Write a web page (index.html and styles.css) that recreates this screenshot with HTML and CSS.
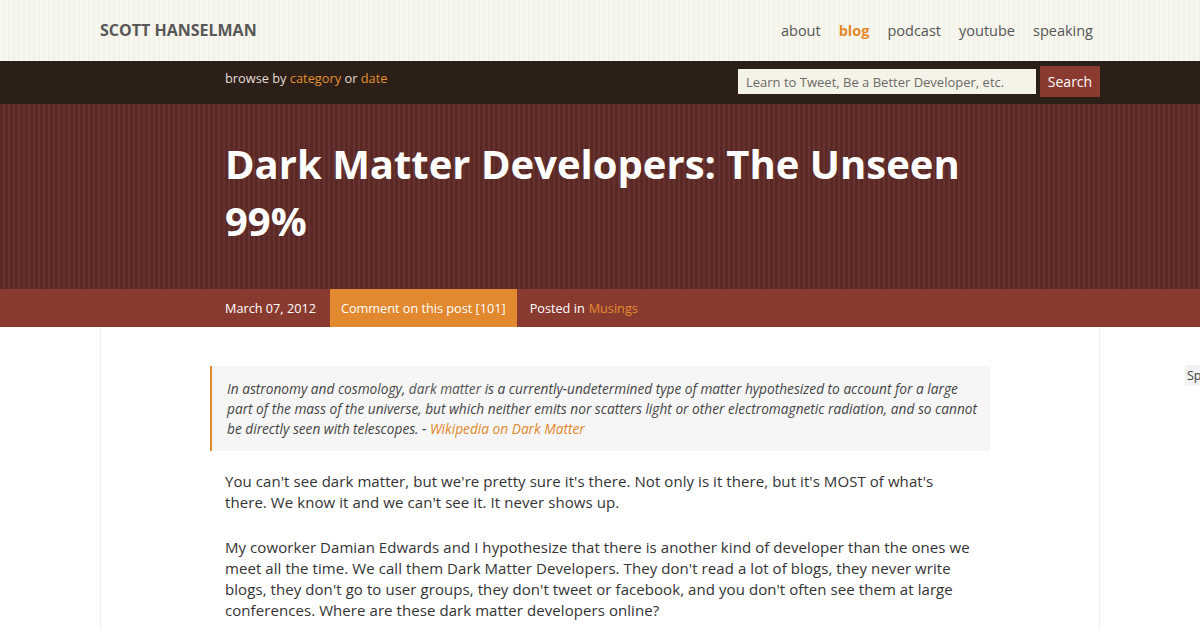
FILE: index.html
```html
<!DOCTYPE html>
<html>
<head>
<meta charset="utf-8">
<title>Dark Matter Developers: The Unseen 99%</title>
<link rel="stylesheet" href="styles.css">
</head>
<body>
<header class="top">
  <div class="wrap top-inner">
    <a class="logo" href="#">SCOTT HANSELMAN</a>
    <nav class="nav">
      <a href="#">about</a>
      <a href="#" class="active">blog</a>
      <a href="#">podcast</a>
      <a href="#">youtube</a>
      <a href="#">speaking</a>
    </nav>
  </div>
</header>
<div class="browse">
  <div class="wrap browse-inner">
    <div class="browse-text">browse by <a href="#">category</a> or <a href="#">date</a></div>
    <form class="search">
      <input class="search-input" type="text" placeholder="Learn to Tweet, Be a Better Developer, etc.">
      <button class="search-btn" type="button">Search</button>
    </form>
  </div>
</div>
<div class="titleband">
  <div class="wrap">
    <h1 class="title">Dark Matter Developers: The Unseen 99%</h1>
  </div>
</div>
<div class="meta">
  <div class="wrap meta-inner">
    <span class="meta-date">March 07, 2012</span>
    <a class="meta-comment" href="#">Comment on this post [101]</a>
    <span class="meta-posted">Posted in <a href="#">Musings</a></span>
  </div>
</div>
<div class="content-row">
  <main class="post">
    <blockquote class="quote">
      In astronomy and cosmology, <span class="dm">dark matter</span> is a currently-undetermined type of matter hypothesized to account for a large part of the mass of the universe, but which neither emits nor scatters light or other electromagnetic radiation, and so cannot be directly seen with telescopes. - <a href="#">Wikipedia on Dark Matter</a>
    </blockquote>
    <p>You can't see dark matter, but we're pretty sure it's there. Not only is it there, but it's MOST of what's there. We know it and we can't see it. It never shows up.</p>
    <p>My coworker Damian Edwards and I hypothesize that there is another kind of developer than the ones we meet all the time. We call them Dark Matter Developers. They don't read a lot of blogs, they never write blogs, they don't go to user groups, they don't tweet or facebook, and you don't often see them at large conferences. Where are these dark matter developers online?</p>
  </main>
  <aside class="side">
    <span class="side-label">Sponsored By</span>
  </aside>
</div>
</body>
</html>
```
FILE: styles.css
```css
html, body {
  margin: 0;
  padding: 0;
}
body {
  font-family: "Open Sans", "Liberation Sans", sans-serif;
  background: #ffffff;
  color: #333;
  overflow: hidden;
  width: 1200px;
  height: 630px;
}
a { text-decoration: none; }

.wrap {
  width: 1000px;
  margin: 0 auto;
}

/* header */
.top {
  height: 61px;
  background-color: #f8f7ef;
  background-image: repeating-linear-gradient(90deg, #f8f7ef 0, #f8f7ef 3px, #f3f2e8 3px, #f3f2e8 5px);
}
.top-inner {
  height: 61px;
  display: flex;
  align-items: center;
  justify-content: space-between;
}
.logo {
  font-weight: 700;
  font-size: 16px;
  color: #575757;
  margin-top: -1px;
}
.nav {
  display: flex;
  gap: 18px;
  margin-right: 7px;
  margin-top: -1px;
}
.nav a {
  font-size: 14.5px;
  color: #555;
}
.nav a.active {
  color: #e2892d;
  font-weight: 700;
}

/* browse bar */
.browse {
  height: 43px;
  background: #2b1f18;
}
.browse-inner {
  height: 43px;
  display: flex;
  align-items: center;
  justify-content: space-between;
}
.browse-text {
  margin-left: 125px;
  font-size: 12.8px;
  color: #e4ddd5;
  margin-top: -10px;
}
.browse-text a { color: #e48e32; }
.search {
  display: flex;
  align-items: center;
  gap: 4px;
  margin-top: -2px;
}
.search-input {
  width: 298px;
  height: 25px;
  box-sizing: border-box;
  border: 0;
  padding: 0 8px;
  background: #f5f3e8;
  font-family: "Open Sans", "Liberation Sans", sans-serif;
  font-size: 13px;
  color: #555;
  outline: none;
}
.search-input::placeholder { color: #6a6a66; }
.search-btn {
  width: 60px;
  height: 31px;
  border: 0;
  background: #8b3a2f;
  color: #fff;
  font-family: "Open Sans", "Liberation Sans", sans-serif;
  font-size: 14px;
  padding: 0;
}

/* title band */
.titleband {
  height: 185px;
  background-color: #5e2b27;
  background-image: repeating-linear-gradient(90deg, #5b2925 0, #5b2925 3px, #663330 3px, #663330 5px);
  box-sizing: border-box;
  padding-top: 31px;
}
.title {
  margin: 0 0 0 125px;
  width: 760px;
  color: #fff;
  font-weight: 700;
  font-size: 40px;
  line-height: 57px;
}

/* meta bar */
.meta {
  height: 38px;
  background: #893a2f;
}
.meta-inner {
  height: 38px;
  display: flex;
  align-items: stretch;
  font-size: 12.7px;
  color: #fff;
}
.meta-date {
  margin-left: 125px;
  display: flex;
  align-items: center;
  margin-right: 14px;
}
.meta-comment {
  display: flex;
  align-items: center;
  background: #e2882e;
  color: #fff;
  padding: 0 11px;
}
.meta-posted {
  display: flex;
  align-items: center;
  margin-left: 13px;
}
.meta-posted a {
  color: #e48e32;
  margin-left: 4px;
}

/* content */
.content-row {
  display: flex;
  align-items: flex-start;
  margin-left: 100px;
}
.post {
  width: 1000px;
  box-sizing: border-box;
  border-left: 1px solid #efefef;
  border-right: 1px solid #efefef;
  padding: 39px 124px 40px 124px;
  min-height: 320px;
  flex-shrink: 0;
}
.quote {
  margin: 0 -110px 20px -15px;
  width: 780px;
  box-sizing: border-box;
  background: #f6f6f6;
  border-left: 2px solid #e2882e;
  padding: 13px 12px 12px 15px;
  font-style: italic;
  font-size: 13.7px;
  line-height: 20px;
  color: #444;
}
.quote .dm {
  color: #555;
}
.quote a { color: #e2882e; }
.post p {
  margin: 0 0 24px 0;
  font-size: 15px;
  line-height: 21px;
  letter-spacing: 0.07px;
  color: #333;
}
.side {
  flex-shrink: 0;
  margin-left: 85px;
  padding-top: 36px;
  white-space: nowrap;
}
.side-label {
  font-size: 12.5px;
  color: #444;
  background: #f2f2f2;
  padding: 2px 2px;
}
```
